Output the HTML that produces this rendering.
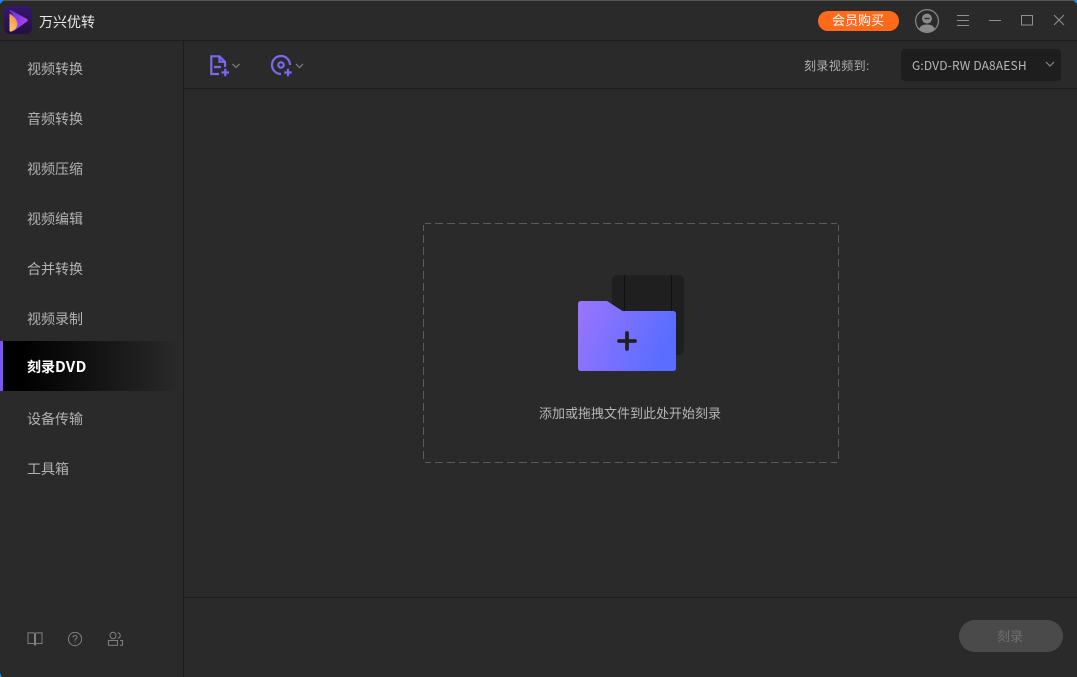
<!DOCTYPE html>
<html lang="zh"><head><meta charset="utf-8"><title>万兴优转</title>
<style>
html,body{margin:0;padding:0;width:1077px;height:677px;overflow:hidden;background:#2a2a2a}
body{position:relative;font-family:"Liberation Sans","Noto Sans CJK SC",sans-serif;color:#b4b4b4}
.a{position:absolute}
.t{position:absolute;white-space:nowrap;line-height:20px;font-size:14px;margin-top:1px}
.ln{position:absolute;background:#1d1d1d}
.nav{left:27px;color:#b2b2b2}
svg{position:absolute;overflow:visible}
</style></head><body>
<div class="a" style="left:0;top:0;width:1077px;height:1px;background:#555"></div>
<svg style="left:0;top:0" width="1077" height="677" viewBox="0 0 1077 677">
<path d="M0 0H4L0 4Z" fill="#1e88d8"/><path d="M1077 0H1073L1077 4Z" fill="#1e88d8"/>
<path d="M0 677V673L2 677Z" fill="#1e88d8"/>
</svg>
<div class="ln" style="left:0;top:40px;width:1077px;height:1px"></div>
<div class="ln" style="left:183px;top:41px;width:1px;height:636px"></div>
<div class="ln" style="left:184px;top:88px;width:893px;height:1px"></div>
<div class="ln" style="left:184px;top:597px;width:893px;height:1px"></div>

<svg style="left:4px;top:6px" width="28" height="28" viewBox="0 0 28 28">
<defs>
<linearGradient id="bgl" x1="0" y1="0" x2="0" y2="1"><stop offset="0" stop-color="#35186e"/><stop offset="1" stop-color="#260f42"/></linearGradient>
<linearGradient id="lg1" x1="0.8" y1="0" x2="0.2" y2="1"><stop offset="0" stop-color="#f58a3c"/><stop offset="1" stop-color="#f9c873"/></linearGradient>
<linearGradient id="lg2" x1="0" y1="0" x2="1" y2="0.6"><stop offset="0" stop-color="#5b34e0"/><stop offset="1" stop-color="#b144f0"/></linearGradient>
<linearGradient id="fg" x1="0" y1="0" x2="1" y2="0.3"><stop offset="0" stop-color="#9b74ff"/><stop offset="1" stop-color="#5a6dff"/></linearGradient>
</defs>
<rect width="28" height="28" rx="6" fill="url(#bgl)"/>
<path d="M5.500 5 Q5.500 3.500 7 4.200 L23 13 Q24.500 14.200 23 15.500 L9 25.500 Q15 15 5.500 5Z" fill="url(#lg2)"/>
<path d="M5.500 7.500 Q12.500 11.500 13.500 17.500 Q13.500 23 7.500 25.500 Q5.500 26 5.500 24Z" fill="url(#lg1)"/>
</svg>
<div class="t" style="left:39px;top:11px;color:#e8e8e8">万兴优转</div>

<div class="a" style="left:818px;top:11px;width:81px;height:20px;border-radius:10px;background:#ff6a1a"></div>
<div class="t" style="left:832px;top:10px;color:#fff;font-size:13px">会员购买</div>
<svg style="left:915px;top:9px" width="24" height="24" viewBox="0 0 24 24">
<circle cx="12" cy="12" r="11.400" fill="none" stroke="#8a8a8a" stroke-width="1.200"/>
<circle cx="12" cy="9.600" r="5" fill="#8a8a8a"/>
<rect x="9.400" y="8.800" width="5.200" height="1.400" fill="#2a2a2a"/>
<path d="M4 20 Q5.500 15.500 12 15.500 Q18.500 15.500 20 20 Q16.500 22.900 12 22.900 Q7.500 22.900 4 20Z" fill="#8a8a8a"/>
</svg>
<svg style="left:957px;top:15px" width="12" height="12" viewBox="0 0 12 12" stroke="#909090" fill="none"><path d="M0 .5H12M0 5.500H12M0 10.500H12"/></svg>
<svg style="left:989px;top:15px" width="12" height="12" viewBox="0 0 12 12" stroke="#909090" fill="none"><path d="M0 5.500H12"/></svg>
<svg style="left:1021px;top:15px" width="12" height="11" viewBox="0 0 12 11" stroke="#909090" fill="none"><rect x=".5" y=".5" width="11" height="9.500"/></svg>
<svg style="left:1054px;top:15px" width="10" height="10" viewBox="0 0 10 10" stroke="#909090" fill="none"><path d="M0 0L10 10M10 0L0 10"/></svg>

<svg style="left:209px;top:55px" width="34" height="22" viewBox="0 0 34 22" fill="none" stroke="#7a68f5" stroke-width="2.200">
<path d="M10 19H2.300V1.300H10.500L16 6.800V12M10.500 1.300V6.800H16M5 12H12"/>
<path d="M12.500 17.500H20M16.300 13.800V21.200"/>
<path d="M23.500 9L27 12.500L30.500 9" stroke="#777" stroke-width="1.300"/>
</svg>
<svg style="left:271px;top:55px" width="34" height="22" viewBox="0 0 34 22" fill="none" stroke="#7a68f5" stroke-width="2.200">
<path d="M19 10A9 9 0 1 0 10 19"/>
<circle cx="10" cy="10" r="2.700"/>
<path d="M13.200 17.500H20.700M17 13.800V21.200"/>
<path d="M25 9L28.500 12.500L32 9" stroke="#777" stroke-width="1.300"/>
</svg>

<div class="t" style="left:804px;top:55px;font-size:12px;letter-spacing:.4px;color:#b0b0b0">刻录视频到:</div>
<div class="a" style="left:901px;top:49px;width:160px;height:32px;border-radius:4px;background:#1e1e1e"></div>
<div class="t" style="left:912px;top:55px;width:114px;overflow:hidden;font-family:'Noto Sans CJK SC',sans-serif;font-size:12px;letter-spacing:.15px;color:#b8b8b8">G:DVD-RW DA8AESH</div>
<svg style="left:1045px;top:61px" width="10" height="7" viewBox="0 0 10 7" fill="none" stroke="#888" stroke-width="1.200"><path d="M1 1L5 5L9 1"/></svg>

<div class="a" style="left:0;top:341px;width:180px;height:50px;background:linear-gradient(90deg,#000 0%,#000 12%,#141414 55%,#2a2a2a 100%)"></div>
<div class="a" style="left:0;top:341px;width:3px;height:50px;background:#7c56f2"></div>
<div class="t nav" style="top:58px">视频转换</div>
<div class="t nav" style="top:108px">音频转换</div>
<div class="t nav" style="top:158px">视频压缩</div>
<div class="t nav" style="top:208px">视频编辑</div>
<div class="t nav" style="top:258px">合并转换</div>
<div class="t nav" style="top:308px">视频录制</div>
<div class="t nav" style="top:356px;color:#fff;font-weight:bold;font-family:'Noto Sans CJK SC',sans-serif">刻录<span style="font-size:15px;letter-spacing:.4px">DVD</span></div>
<div class="t nav" style="top:408px">设备传输</div>
<div class="t nav" style="top:458px">工具箱</div>

<svg style="left:27px;top:632px" width="16" height="14" viewBox="0 0 16 14" fill="none" stroke="#808080">
<path d="M1 .9H7L8 2L9 .9H15V11.500H9.500L8 12.500L6.500 11.500H1Z"/><path d="M8 2V13.500" stroke-width="2"/></svg>
<svg style="left:68px;top:632px" width="14" height="14" viewBox="0 0 14 14" fill="none" stroke="#808080">
<circle cx="7" cy="7" r="6.600"/><path d="M5 5.600Q5 3.500 7 3.500Q9 3.500 9 5.300Q9 6.300 7.600 7Q7 7.400 7 8.600"/><path d="M7 9.600V10.800"/></svg>
<svg style="left:108px;top:632px" width="15" height="14" viewBox="0 0 15 14" fill="none" stroke="#808080">
<ellipse cx="5" cy="3.500" rx="3" ry="3.200"/><path d="M9.600 .6Q12.200 1 12.200 3.500Q12.200 6 9.600 6.400"/><rect x=".5" y="8.500" width="9" height="4.800"/><path d="M12 8.500H14.500V13.300H12"/></svg>

<svg style="left:0;top:0" width="1077" height="677" viewBox="0 0 1077 677" fill="none" stroke="#5c5c5c">
<path d="M425 223.500H837" stroke-dasharray="8 4" stroke-dashoffset="2"/>
<path d="M425 462.500H837" stroke-dasharray="8 4" stroke-dashoffset="2"/>
<path d="M423.500 225V461" stroke-dasharray="8 4" stroke-dashoffset="2"/>
<path d="M838.500 225V461" stroke-dasharray="8 4" stroke-dashoffset="2"/>
</svg>

<svg style="left:578px;top:275px" width="106" height="96" viewBox="0 0 106 96">
<rect x="34" y="0" width="72" height="80" rx="5" fill="#1f1f1f"/>
<path d="M46.500 0V40M93.500 0V40" stroke="#0f0f0f" stroke-width="1"/>
<path d="M3 26H29L44.500 36H95Q98 36 98 39V93Q98 96 95 96H3Q0 96 0 93V29Q0 26 3 26Z" fill="url(#fg)"/>
<path d="M41 66H57M49 58V74" stroke="#222" stroke-width="3.800" stroke-linecap="round"/>
</svg>
<div class="t" style="left:539px;top:403px;font-size:13px;color:#b6b6b6">添加或拖拽文件到此处开始刻录</div>

<div class="a" style="left:959px;top:620px;width:104px;height:32px;border-radius:16px;background:#4a4a4a"></div>
<div class="t" style="left:997px;top:626px;font-size:13px;color:#707070">刻录</div>
</body></html>
